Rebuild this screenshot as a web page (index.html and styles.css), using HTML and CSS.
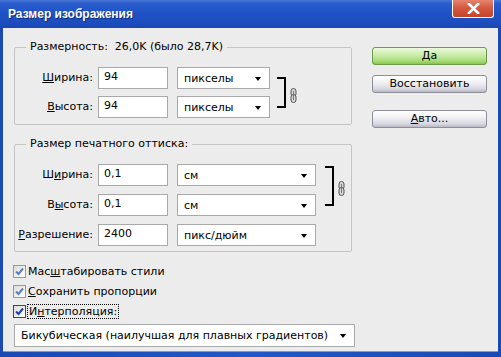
FILE: index.html
```html
<!DOCTYPE html>
<html lang="ru">
<head>
    <meta charset="UTF-8">
    <title>Размер изображения</title>
    <link rel="stylesheet" href="styles.css">
</head>
<body>
    <div class="window">
        <div class="titlebar">
            <span class="title">Размер изображения</span>
            <span class="close-btn">
                <svg width="13" height="11" viewBox="0 0 13 11">
                    <path d="M2 1 L11 10 M11 1 L2 10" stroke="#fff" stroke-width="2.6" stroke-linecap="square"/>
                </svg>
            </span>
        </div>

        <div class="client">
            <div class="main">
                <fieldset class="group group-pixels">
                    <legend>Размерность:&nbsp; 26,0K (было 28,7K)</legend>
                    <div class="rows rows-pixels">
                        <label class="field-label"><u>Ш</u>ирина:</label>
                        <input class="field" type="text" value="94">
                        <div class="combo">пикселы<span class="arrow"></span></div>

                        <div class="link link-pixels">
                            <svg class="bracket" width="10" height="31" viewBox="0 0 10 31">
                                <path d="M0 1 H8 V30 H0" fill="none" stroke="#000" stroke-width="2"/>
                            </svg>
                            <svg class="chain" width="7" height="15" viewBox="0 0 7 15">
                                <rect x="1" y="0.5" width="5" height="8" rx="2.5" fill="#d8d8d8" stroke="#555"/>
                                <rect x="1" y="6.5" width="5" height="8" rx="2.5" fill="#d8d8d8" stroke="#555"/>
                                <path d="M3.5 3 V12" stroke="#777"/>
                            </svg>
                        </div>

                        <label class="field-label"><u>В</u>ысота:</label>
                        <input class="field" type="text" value="94">
                        <div class="combo">пикселы<span class="arrow"></span></div>
                    </div>
                </fieldset>

                <fieldset class="group group-print">
                    <legend>Размер печатного оттиска:</legend>
                    <div class="rows rows-print">
                        <label class="field-label">Ш<u>и</u>рина:</label>
                        <input class="field" type="text" value="0,1">
                        <div class="combo">см<span class="arrow"></span></div>

                        <div class="link link-print">
                            <svg class="bracket" width="10" height="40" viewBox="0 0 10 40">
                                <path d="M0 1 H8 V39 H0" fill="none" stroke="#000" stroke-width="2"/>
                            </svg>
                            <svg class="chain" width="7" height="15" viewBox="0 0 7 15">
                                <rect x="1" y="0.5" width="5" height="8" rx="2.5" fill="#d8d8d8" stroke="#555"/>
                                <rect x="1" y="6.5" width="5" height="8" rx="2.5" fill="#d8d8d8" stroke="#555"/>
                                <path d="M3.5 3 V12" stroke="#777"/>
                            </svg>
                        </div>

                        <label class="field-label">В<u>ы</u>сота:</label>
                        <input class="field" type="text" value="0,1">
                        <div class="combo">см<span class="arrow"></span></div>

                        <label class="field-label"><u>Р</u>азрешение:</label>
                        <input class="field" type="text" value="2400">
                        <div class="combo">пикс/дюйм<span class="arrow"></span></div>
                    </div>
                </fieldset>

                <div class="checks">
                    <div class="check-row">
                        <span class="checkbox soft"><svg width="9" height="9" viewBox="0 0 9 9"><path d="M1 4.5 L3.5 7 L8 1.5" fill="none" stroke="#5b7fc0" stroke-width="2"/></svg></span>
                        <span>Мас<u>ш</u>табировать стили</span>
                    </div>
                    <div class="check-row">
                        <span class="checkbox soft"><svg width="9" height="9" viewBox="0 0 9 9"><path d="M1 4.5 L3.5 7 L8 1.5" fill="none" stroke="#5b7fc0" stroke-width="2"/></svg></span>
                        <span><u>С</u>охранить пропорции</span>
                    </div>
                    <div class="check-row">
                        <span class="checkbox"><svg width="9" height="9" viewBox="0 0 9 9"><path d="M1 4.5 L3.5 7 L8 1.5" fill="none" stroke="#1d3fb0" stroke-width="2"/></svg></span>
                        <span class="focused">И<u>н</u>терполяция:</span>
                    </div>
                </div>

                <div class="combo combo-wide">Бикубическая (наилучшая для плавных градиентов)<span class="arrow"></span></div>
            </div>

            <div class="buttons">
                <div class="btn btn-default">Да</div>
                <div class="btn">Восстановить</div>
                <div class="btn btn-auto"><u>А</u>вто...</div>
            </div>
        </div>
    </div>
</body>
</html>
```

FILE: styles.css
```css
body {
    margin: 0;
    background: #ececec;
    font-family: "DejaVu Sans", "Liberation Sans", sans-serif;
    font-size: 11px;
    color: #000;
}

.window {
    width: 501px;
    height: 357px;
    box-sizing: border-box;
    display: flex;
    flex-direction: column;
    background: linear-gradient(to right, #1a49b4, #2157c8 50%, #1a49b4);
    padding: 0 3px 5px 3px;
    overflow: hidden;
}

/* Title bar */
.titlebar {
    height: 28px;
    margin: 0 -3px;
    padding: 0 7px 0 8px;
    display: flex;
    align-items: flex-start;
    justify-content: space-between;
    background: linear-gradient(to bottom, #4a78d8 0%, #2a5ccd 12%, #2053c6 45%, #1c4cbc 85%, #1a47b2 100%);
}
.title {
    margin-top: 7px;
    color: #fff;
    font-family: "Liberation Sans", Arial, sans-serif;
    font-weight: bold;
    font-size: 12px;
    text-shadow: 1px 1px 0 #0c2a78;
}
.close-btn {
    width: 42px;
    height: 20px;
    margin-top: -2px;
    box-sizing: border-box;
    border: 1px solid #fff;
    border-top: none;
    border-radius: 0 0 3px 3px;
    background: linear-gradient(to bottom, #e9907c, #d45a40 50%, #c44428);
    display: flex;
    align-items: center;
    justify-content: center;
    padding-top: 1px;
}

/* Client area */
.client {
    flex: 1;
    background: #ececec;
    display: flex;
    padding: 12px 0 0 11px;
    border-bottom: 1px solid #8a98b8;
}
.main {
    width: 341px;
}

.group {
    margin: 0;
    width: 338px;
    box-sizing: border-box;
    padding: 0 0 6px 0;
    border: 1px solid #c4c4c4;
    border-radius: 2px;
}
.group legend {
    margin-left: 11px;
    padding: 0 4px;
    line-height: 14px;
}
.group-print {
    margin-top: 12px;
    padding-bottom: 5px;
}

.rows {
    display: grid;
    align-items: center;
    margin-top: 12px;
}
.rows-pixels {
    grid-template-columns: 83px 70px 102px auto;
    grid-template-rows: 23px 23px;
    row-gap: 6px;
}
.rows-print {
    grid-template-columns: 83px 70px 148px auto;
    grid-template-rows: 23px 23px 23px;
    row-gap: 7px;
}

.field-label {
    text-align: right;
    padding-right: 5px;
}
.field {
    width: 70px;
    height: 22px;
    box-sizing: border-box;
    margin: 0;
    border: 1px solid #a9a9a9;
    padding: 0 0 3px 5px;
    font: inherit;
    color: #000;
    background: #fff;
}
.combo {
    position: relative;
    height: 22px;
    margin-left: 9px;
    box-sizing: border-box;
    border: 1px solid #a9a9a9;
    background: #fff;
    padding: 4px 0 0 6px;
}
.arrow {
    position: absolute;
    right: 8px;
    top: 9px;
    border-left: 3.5px solid transparent;
    border-right: 3.5px solid transparent;
    border-top: 4px solid #000;
}

.link {
    grid-column: 4;
    grid-row: 1 / 3;
    display: flex;
    align-items: center;
    gap: 3px;
}
.link-pixels {
    margin-left: 7px;
    margin-top: 1px;
}
.link-print {
    margin-left: 9px;
    margin-top: -7px;
}
.link .chain {
    margin-top: 5px;
}

/* Checkboxes */
.checks {
    margin-top: 9px;
    margin-left: -1px;
}
.check-row {
    height: 20px;
    display: flex;
    align-items: center;
    gap: 2px;
}
.checkbox {
    width: 13px;
    height: 13px;
    box-sizing: border-box;
    border: 1px solid #1c4f8e;
    background: linear-gradient(135deg, #dcdcd7, #fff);
    display: flex;
    align-items: center;
    justify-content: center;
}
.checkbox.soft {
    border-color: #8e9aa8;
}
.focused {
    outline: 1px dotted #000;
    outline-offset: 0;
    padding: 0 1px;
}

.combo-wide {
    margin: 3px 0 0 0;
    width: 341px;
    height: 23px;
    padding-left: 6px;
}

/* Buttons */
.buttons {
    margin-left: 17px;
    margin-top: 7px;
    width: 115px;
    display: flex;
    flex-direction: column;
}
.btn {
    height: 18px;
    box-sizing: border-box;
    border: 1px solid #8f8f9c;
    border-radius: 3px;
    background: linear-gradient(to bottom, #ffffff 0%, #f1f1f4 40%, #d8d8e0 80%, #b9b9c6 100%);
    text-align: center;
    line-height: 16px;
    margin-bottom: 10px;
}
.btn-default {
    border-color: #6f9a4a;
    background: linear-gradient(to bottom, #eaf8dc 0%, #cdeeae 40%, #a9dc78 80%, #86c64c 100%);
}
.btn-auto {
    margin-top: 7px;
}
```
